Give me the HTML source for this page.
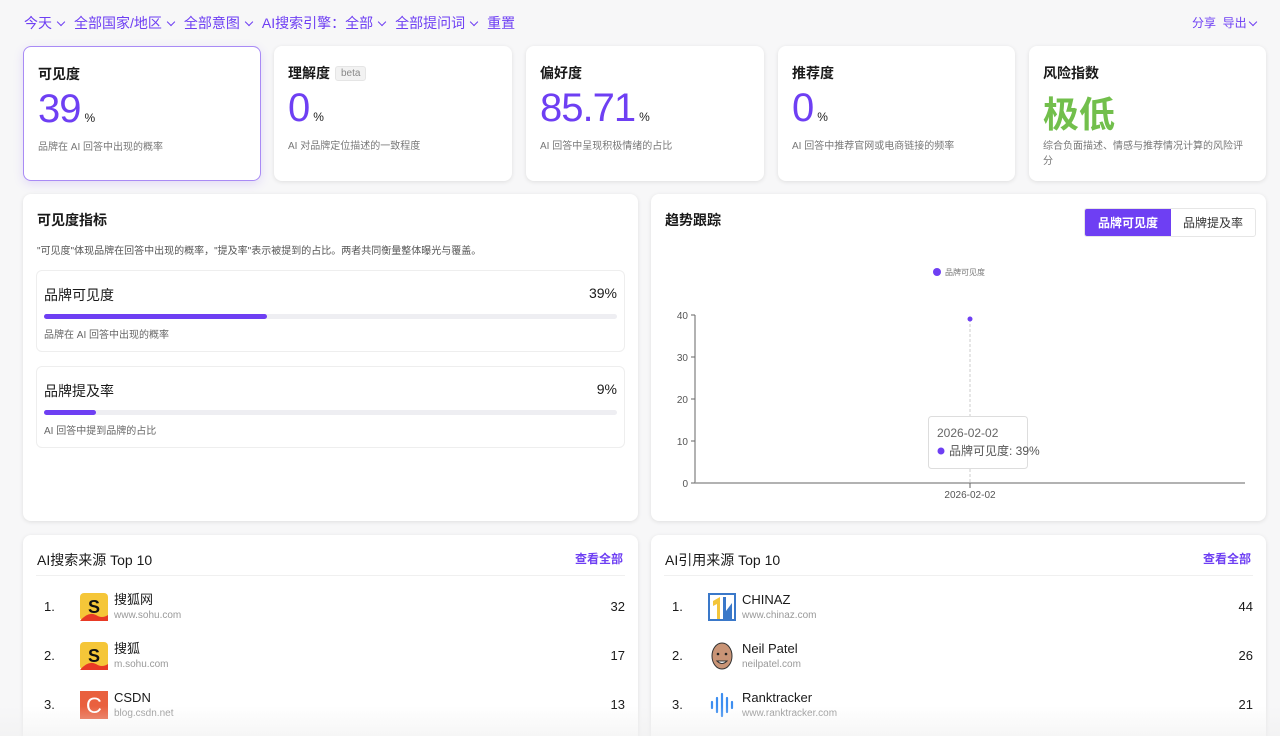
<!DOCTYPE html><html><head><meta charset="utf-8"><style>
*{box-sizing:border-box;margin:0;padding:0}
html,body{width:1280px;height:736px;overflow:hidden}
body{background:#f7f7f8;font-family:"Liberation Sans","Noto Sans CJK SC",sans-serif;color:#1a1a1a;position:relative}
.top{position:absolute;top:13px;left:24px;font-size:14px;color:#6e3ff3;display:flex;gap:7px}
.chev{display:inline-block;width:6px;height:6px;border-right:1.2px solid #6e3ff3;border-bottom:1.2px solid #6e3ff3;transform:rotate(45deg);margin:0 3px 4px 6px;vertical-align:middle}
.card{position:absolute;background:#fff;border-radius:8px;box-shadow:0 1px 4px rgba(0,0,0,.1)}
.m{top:46px;height:135px;width:238px;padding:17px 14px}
.m h4{font-size:14px;font-weight:bold;height:20px}
.num{font-size:40px;color:#6e3ff3;margin-top:3px;height:46px;letter-spacing:-1px}
.num small{font-size:12px;color:#222;margin-left:4px;letter-spacing:0}
.desc{font-size:10px;color:#777;margin-top:7px;line-height:15px}
.beta{display:inline-block;font-size:10px;color:#888;background:#f2f2f2;border:1px solid #e5e5e5;border-radius:3px;padding:1px 5px;margin-left:5px;font-weight:normal;vertical-align:2px}
.item{position:absolute;left:13px;width:589px;height:82px;border:1px solid #eee;border-radius:6px;padding:14px 7px}
.item .t{display:flex;justify-content:space-between;font-size:14px}
.bar{height:5px;background:#eeeef2;border-radius:3px;margin-top:9px;position:relative}
.bar i{position:absolute;left:0;top:0;height:5px;background:#6e3ff3;border-radius:3px}
.item .d{font-size:10px;color:#666;margin-top:7px}
.row{position:absolute;left:13px;right:13px;height:49px;display:flex;align-items:center}
.row .n{width:44px;font-size:13px;padding-left:8px}
.row .ic{width:28px;height:28px;margin-right:6px}
.row .nm{font-size:13px;line-height:17px}
.row .u{font-size:10px;color:#999;line-height:15px}
.row .c{margin-left:auto;font-size:13px}
</style></head><body>
<div class="top"><span>今天<i class="chev"></i></span><span>全部国家/地区<i class="chev"></i></span><span>全部意图<i class="chev"></i></span><span>AI搜索引擎：全部<i class="chev"></i></span><span>全部提问词<i class="chev"></i></span><span>重置</span></div>
<div style="position:absolute;top:14px;left:1192px;font-size:12px;color:#6e3ff3">分享&nbsp; 导出<i class="chev" style="margin-left:3px;width:6px;height:6px"></i></div>

<div class="card m" style="left:23px;border:1px solid #a98bf5;box-shadow:0 3px 10px rgba(110,63,243,.15)"><h4>可见度</h4><div class="num">39<small>%</small></div><div class="desc">品牌在 AI 回答中出现的概率</div></div>
<div class="card m" style="left:274px"><h4>理解度<span class="beta">beta</span></h4><div class="num">0<small>%</small></div><div class="desc">AI 对品牌定位描述的一致程度</div></div>
<div class="card m" style="left:526px"><h4>偏好度</h4><div class="num">85.71<small>%</small></div><div class="desc">AI 回答中呈现积极情绪的占比</div></div>
<div class="card m" style="left:778px;width:237px"><h4>推荐度</h4><div class="num">0<small>%</small></div><div class="desc">AI 回答中推荐官网或电商链接的频率</div></div>
<div class="card m" style="left:1029px;width:237px;padding-right:20px"><h4>风险指数</h4><div class="num" style="color:#72bf4c;font-weight:bold;font-size:36px;letter-spacing:0">极低</div><div class="desc">综合负面描述、情感与推荐情况计算的风险评分</div></div>

<div class="card" style="left:23px;top:194px;width:615px;height:327px">
<div style="position:absolute;left:14px;top:16px;font-size:14px;font-weight:bold">可见度指标</div>
<div style="position:absolute;left:14px;top:48px;font-size:10px;color:#555">"可见度"体现品牌在回答中出现的概率，"提及率"表示被提到的占比。两者共同衡量整体曝光与覆盖。</div>
<div class="item" style="top:76px"><div class="t"><span>品牌可见度</span><span>39%</span></div><div class="bar"><i style="width:39%"></i></div><div class="d">品牌在 AI 回答中出现的概率</div></div>
<div class="item" style="top:172px"><div class="t"><span>品牌提及率</span><span>9%</span></div><div class="bar"><i style="width:9%"></i></div><div class="d">AI 回答中提到品牌的占比</div></div>
</div>

<div class="card" style="left:651px;top:194px;width:615px;height:327px">
<div style="position:absolute;left:14px;top:16px;font-size:14px;font-weight:bold">趋势跟踪</div>
<div style="position:absolute;left:433px;top:14px;display:flex;font-size:12px;border:1px solid #e6e6e6;border-radius:3px;overflow:hidden"><span style="background:#6e3ff3;color:#fff;padding:5px 13px;font-weight:bold">品牌可见度</span><span style="padding:5px 12px;color:#333">品牌提及率</span></div>
<svg width="615" height="327" style="position:absolute;left:0;top:0" font-family="Liberation Sans" font-size="10" fill="#555">
<circle cx="286" cy="78" r="4" fill="#6e3ff3"/><text x="294" y="81" font-size="8" fill="#777">品牌可见度</text>
<line x1="44" y1="121" x2="44" y2="289" stroke="#666"/>
<line x1="44" y1="289" x2="594" y2="289" stroke="#999" stroke-width="1.5"/>
<g stroke="#666"><line x1="40" y1="121" x2="44" y2="121"/><line x1="40" y1="163" x2="44" y2="163"/><line x1="40" y1="205" x2="44" y2="205"/><line x1="40" y1="247" x2="44" y2="247"/><line x1="40" y1="289" x2="44" y2="289"/><line x1="319" y1="289" x2="319" y2="294"/></g>
<g text-anchor="end"><text x="37" y="125">40</text><text x="37" y="167">30</text><text x="37" y="209">20</text><text x="37" y="251">10</text><text x="37" y="293">0</text></g>
<text x="319" y="304" text-anchor="middle">2026-02-02</text>
<line x1="319" y1="125" x2="319" y2="289" stroke="#ccc" stroke-dasharray="3,2"/>
<circle cx="319" cy="125" r="2.5" fill="#6e3ff3"/>
<rect x="277.5" y="222.5" width="99" height="52" rx="3" fill="#fff" stroke="#ddd"/>
<text x="286" y="243" font-size="12" fill="#666">2026-02-02</text>
<circle cx="290" cy="257" r="3.5" fill="#6e3ff3"/><text x="298" y="261" font-size="12" fill="#555">品牌可见度: 39%</text>
</svg></div>

<div class="card" style="left:23px;top:535px;width:615px;height:220px">
<div style="position:absolute;left:14px;top:15px;font-size:14px">AI搜索来源 Top 10</div>
<div style="position:absolute;right:15px;top:15px;font-size:12px;color:#6e3ff3;font-weight:bold">查看全部</div>
<div style="position:absolute;left:13px;right:13px;top:40px;border-top:1px solid #f0f0f0"></div>
<div class="row" style="top:47px"><span class="n">1.</span><svg class="ic" viewBox="0 0 28 28"><rect width="28" height="28" rx="4" fill="#f5c638"/><text x="14" y="20" font-size="18" font-weight="bold" text-anchor="middle" fill="#111" font-family="Liberation Sans">S</text><path d="M0 28 Q8 18 16 22 Q22 26 28 22 L28 28Z" fill="#e83a25"/></svg><div><div class="nm">搜狐网</div><div class="u">www.sohu.com</div></div><span class="c">32</span></div>
<div class="row" style="top:96px"><span class="n">2.</span><svg class="ic" viewBox="0 0 28 28"><rect width="28" height="28" rx="4" fill="#f5c638"/><text x="14" y="20" font-size="18" font-weight="bold" text-anchor="middle" fill="#111" font-family="Liberation Sans">S</text><path d="M0 28 Q8 18 16 22 Q22 26 28 22 L28 28Z" fill="#e83a25"/></svg><div><div class="nm">搜狐</div><div class="u">m.sohu.com</div></div><span class="c">17</span></div>
<div class="row" style="top:145px"><span class="n">3.</span><svg class="ic" viewBox="0 0 28 28"><rect width="28" height="28" fill="#e9603e"/><text x="14" y="22" font-size="22" text-anchor="middle" fill="#fff" font-family="Liberation Sans">C</text></svg><div><div class="nm">CSDN</div><div class="u">blog.csdn.net</div></div><span class="c">13</span></div>
</div>

<div class="card" style="left:651px;top:535px;width:615px;height:220px">
<div style="position:absolute;left:14px;top:15px;font-size:14px">AI引用来源 Top 10</div>
<div style="position:absolute;right:15px;top:15px;font-size:12px;color:#6e3ff3;font-weight:bold">查看全部</div>
<div style="position:absolute;left:13px;right:13px;top:40px;border-top:1px solid #f0f0f0"></div>
<div class="row" style="top:47px"><span class="n">1.</span><svg class="ic" viewBox="0 0 28 28"><rect x="1" y="1" width="26" height="26" fill="#fff" stroke="#3a78c9" stroke-width="2"/><path d="M5 8 L12 4 L12 26 L9 26 L9 11 L5 13Z" fill="#f3c53a"/><path d="M15 4 L18 4 L18 18 L24 10 L24 26 L15 26Z" fill="#3a78c9"/></svg><div><div class="nm">CHINAZ</div><div class="u">www.chinaz.com</div></div><span class="c">44</span></div>
<div class="row" style="top:96px"><span class="n">2.</span><svg class="ic" viewBox="0 0 28 28"><ellipse cx="14" cy="14" rx="10" ry="13" fill="#c99476" stroke="#333"/><circle cx="10" cy="12" r="1.3" fill="#222"/><circle cx="18" cy="12" r="1.3" fill="#222"/><path d="M9 19 Q14 24 19 19Z" fill="#fff" stroke="#333"/></svg><div><div class="nm">Neil Patel</div><div class="u">neilpatel.com</div></div><span class="c">26</span></div>
<div class="row" style="top:145px"><span class="n">3.</span><svg class="ic" viewBox="0 0 28 28" stroke="#3d8ef0" stroke-width="2.2" stroke-linecap="round"><line x1="4" y1="11" x2="4" y2="17"/><line x1="9" y1="7" x2="9" y2="21"/><line x1="14" y1="3" x2="14" y2="25"/><line x1="19" y1="7" x2="19" y2="21"/><line x1="24" y1="11" x2="24" y2="17"/></svg><div><div class="nm">Ranktracker</div><div class="u">www.ranktracker.com</div></div><span class="c">21</span></div>
</div>
<div style="position:absolute;left:0;right:0;top:706px;height:30px;background:linear-gradient(rgba(255,255,255,0),rgba(240,240,240,.6))"></div>
</body></html>
